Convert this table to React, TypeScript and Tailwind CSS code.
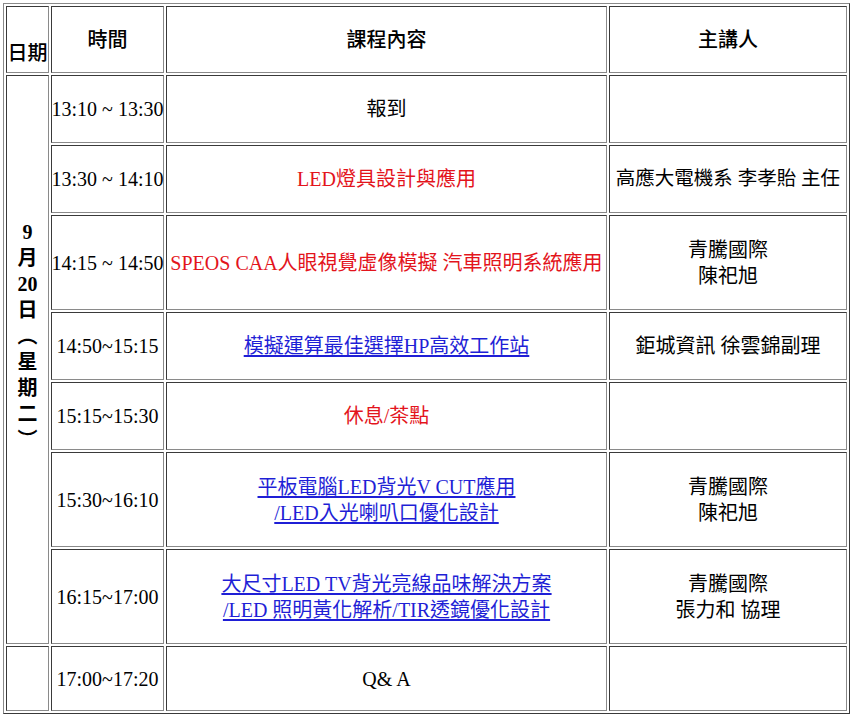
import React from "react";

const cellBase =
  "flex items-center justify-center text-center whitespace-nowrap border border-t-[#3a3a3a] border-l-[#3a3a3a] border-r-[#8a8a8a] border-b-[#8a8a8a] leading-[26px]";

function Cell({ className = "", children }: { className?: string; children?: React.ReactNode }) {
  return <div className={`${cellBase} ${className}`}>{children}</div>;
}

const red = "text-[#e3141c]";
const link = "text-[#1f1fd6] underline underline-offset-2";

export default function App() {
  return (
    <div className="bg-white min-h-[716px] pl-[3px] pt-[3px] font-[family-name:'Liberation_Serif','Noto_Sans_CJK_TC',serif] text-[20px] text-black">
      <div className="grid w-[847px] grid-cols-[43px_113px_441px_238px] grid-rows-[67px_68px_68px_95px_68px_68px_95px_95px_65px] gap-[2px] p-[2px] border border-t-[#8a8a8a] border-l-[#8a8a8a] border-r-[#3a3a3a] border-b-[#3a3a3a]">
        {/* header */}
        <Cell className="items-end pb-[6px] font-medium">日期</Cell>
        <Cell className="font-medium">時間</Cell>
        <Cell className="font-medium">課程內容</Cell>
        <Cell className="font-medium">主講人</Cell>

        {/* date column spanning rows */}
        <div className={`${cellBase} row-span-7 flex-col justify-start pt-[143px] font-bold`}>
          <span>9</span>
          <span>月</span>
          <span>20</span>
          <span>日</span>
          <span>︵</span>
          <span>星</span>
          <span>期</span>
          <span>二</span>
          <span>︶</span>
        </div>

        {/* row 1 */}
        <Cell>13:10 ~ 13:30</Cell>
        <Cell>報到</Cell>
        <Cell />

        {/* row 2 */}
        <Cell>13:30 ~ 14:10</Cell>
        <Cell className={red}>LED燈具設計與應用</Cell>
        <Cell className="text-[19.5px]">高應大電機系 李孝貽 主任</Cell>

        {/* row 3 */}
        <Cell>14:15 ~ 14:50</Cell>
        <Cell className={red}>SPEOS CAA人眼視覺虛像模擬 汽車照明系統應用</Cell>
        <Cell>
          青騰國際
          <br />
          陳祀旭
        </Cell>

        {/* row 4 */}
        <Cell>14:50~15:15</Cell>
        <Cell>
          <span className={link}>模擬運算最佳選擇HP高效工作站</span>
        </Cell>
        <Cell>鉅城資訊 徐雲錦副理</Cell>

        {/* row 5 */}
        <Cell>15:15~15:30</Cell>
        <Cell className={red}>休息/茶點</Cell>
        <Cell />

        {/* row 6 */}
        <Cell>15:30~16:10</Cell>
        <Cell>
          <span className={link}>
            平板電腦LED背光V CUT應用
            <br />
            /LED入光喇叭口優化設計
          </span>
        </Cell>
        <Cell>
          青騰國際
          <br />
          陳祀旭
        </Cell>

        {/* row 7 */}
        <Cell>16:15~17:00</Cell>
        <Cell>
          <span className={link}>
            大尺寸LED TV背光亮線品味解決方案
            <br />
            /LED 照明黃化解析/TIR透鏡優化設計
          </span>
        </Cell>
        <Cell>
          青騰國際
          <br />
          張力和 協理
        </Cell>

        {/* row 8 */}
        <Cell />
        <Cell>17:00~17:20</Cell>
        <Cell>Q&amp; A</Cell>
        <Cell />
      </div>
    </div>
  );
}
